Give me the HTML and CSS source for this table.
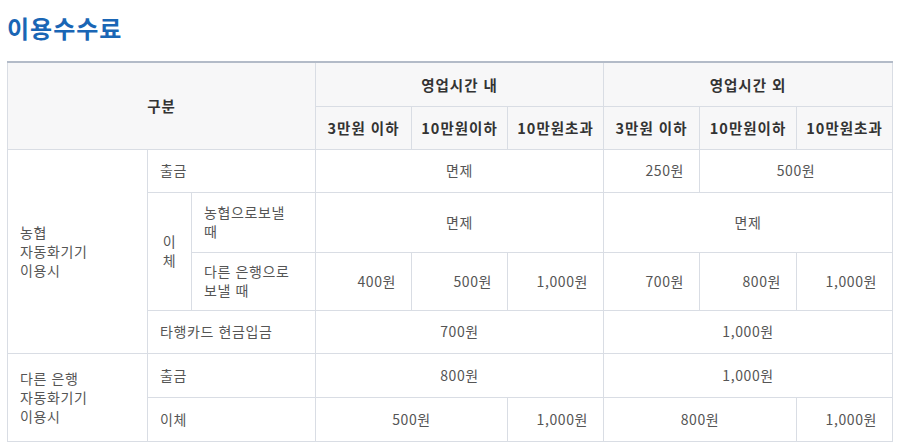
FILE: index.html
```html
<!DOCTYPE html>
<html lang="ko">
<head>
<meta charset="utf-8">
<title>이용수수료</title>
<link rel="stylesheet" href="styles.css">
</head>
<body>
<div class="page">
  <h2 class="title">이용수수료</h2>
  <table class="fee">
    <colgroup>
      <col class="c-a"><col class="c-b"><col class="c-c">
      <col class="c-d"><col class="c-d"><col class="c-d">
      <col class="c-d"><col class="c-e"><col class="c-d">
    </colgroup>
    <thead>
      <tr class="h1">
        <th rowspan="2" colspan="3">구분</th>
        <th colspan="3">영업시간 내</th>
        <th colspan="3">영업시간 외</th>
      </tr>
      <tr class="h2">
        <th>3만원 이하</th>
        <th>10만원이하</th>
        <th>10만원초과</th>
        <th>3만원 이하</th>
        <th>10만원이하</th>
        <th>10만원초과</th>
      </tr>
    </thead>
    <tbody>
      <tr class="r43">
        <td rowspan="4">농협<br>자동화기기<br>이용시</td>
        <td colspan="2">출금</td>
        <td colspan="3" class="c">면제</td>
        <td class="r">250원</td>
        <td colspan="2" class="c">500원</td>
      </tr>
      <tr class="r60">
        <td rowspan="2" class="c">이<br>체</td>
        <td>농협으로보낼<br>때</td>
        <td colspan="3" class="c">면제</td>
        <td colspan="3" class="c">면제</td>
      </tr>
      <tr class="r58">
        <td>다른 은행으로<br>보낼 때</td>
        <td class="r">400원</td>
        <td class="r">500원</td>
        <td class="r">1,000원</td>
        <td class="r">700원</td>
        <td class="r">800원</td>
        <td class="r">1,000원</td>
      </tr>
      <tr class="r43">
        <td colspan="2">타행카드 현금입금</td>
        <td colspan="3" class="c">700원</td>
        <td colspan="3" class="c">1,000원</td>
      </tr>
      <tr class="r44">
        <td rowspan="2">다른 은행<br>자동화기기<br>이용시</td>
        <td colspan="2">출금</td>
        <td colspan="3" class="c">800원</td>
        <td colspan="3" class="c">1,000원</td>
      </tr>
      <tr class="r44">
        <td colspan="2">이체</td>
        <td colspan="2" class="c">500원</td>
        <td class="r">1,000원</td>
        <td colspan="2" class="c">800원</td>
        <td class="r">1,000원</td>
      </tr>
    </tbody>
  </table>
</div>
</body>
</html>
```
FILE: styles.css
```css
html, body {
  margin: 0;
  padding: 0;
  background: #fff;
}
.page {
  padding: 13px 0 0 7px;
  font-family: "Noto Sans CJK KR", "Noto Sans", sans-serif;
}
.title {
  margin: 0 0 19px 0;
  font-size: 24px;
  line-height: 29px;
  font-weight: 700;
  color: #1a66b5;
  letter-spacing: 1px;
}
.fee {
  border-collapse: collapse;
  table-layout: fixed;
  width: 885px;
  border-top: 2px solid #b3bbc8;
}
.c-a { width: 140px; }
.c-b { width: 44px; }
.c-c { width: 124px; }
.c-d { width: 96px; }
.c-e { width: 97px; }
.fee th, .fee td {
  border: 1px solid #d9dde4;
  padding: 0 12px;
  vertical-align: middle;
}
.fee th {
  background: #f7f7f8;
  color: #333;
  font-size: 14.5px;
  font-weight: 700;
  letter-spacing: 1px;
  text-align: center;
  padding: 0 2px;
}
.fee td {
  color: #555;
  font-size: 14px;
  line-height: 19px;
  letter-spacing: 0.6px;
  text-align: left;
}
.fee td.c { text-align: center; }
.fee td.r { text-align: right; padding-right: 15px; }
.h1 { height: 44px; }
.h2 { height: 43px; }
.r43 { height: 43px; }
.r44 { height: 44px; }
.r58 { height: 58px; }
.r60 { height: 60px; }
```
